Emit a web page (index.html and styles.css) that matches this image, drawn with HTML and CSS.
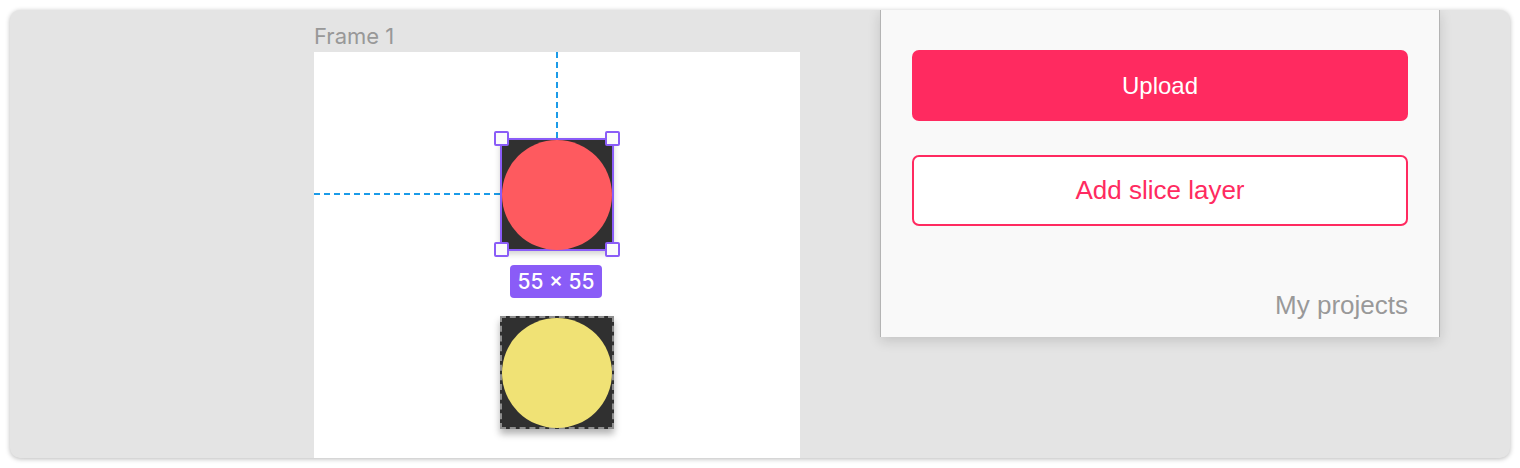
FILE: index.html
```html
<!DOCTYPE html>
<html lang="en">
<head>
  <meta charset="UTF-8" />
  <meta name="viewport" content="width=device-width, initial-scale=1.0"/>
  <title>Slicer</title>
  <link rel="stylesheet" href="styles.css">
</head>
<body>
  <div class="window">
    <div class="canvas">
      <div class="frame-label">Frame 1</div>
      <div class="frame"></div>

      <!-- guides from the selection to the frame edges -->
      <div class="guide guide-v"></div>
      <div class="guide guide-h"></div>

      <div class="layer layer-selected">
        <div class="dot dot-red"></div>
        <span class="handle tl"></span>
        <span class="handle tr"></span>
        <span class="handle bl"></span>
        <span class="handle br"></span>
      </div>
      <div class="size-badge">55 × 55</div>

      <div class="layer layer-slice">
        <div class="dot dot-yellow"></div>
      </div>
    </div>

    <div class="panel">
      <button class="btn btn-primary">Upload</button>
      <button class="btn btn-outline">Add slice layer</button>
      <a class="projects" href="#">My projects</a>
    </div>
  </div>
</body>
</html>
```

FILE: styles.css
```css
:root {
  --pink: #ff2a60;
  --purple: #8a5cf7;
  --guide: #1b9be8;
  --canvas-bg: #e4e4e4;
}

body {
  margin: 0;
  padding: 10px;
  background: #ffffff;
  font-family: 'Liberation Sans', Arial, sans-serif;
}

.window {
  position: relative;
  height: 448px;
  border-radius: 10px;
  background: var(--canvas-bg);
  box-shadow: 0 1px 5px rgba(0,0,0,0.28);
  overflow: hidden;
}

.canvas {
  position: absolute;
  inset: 0;
}

.frame-label {
  position: absolute;
  left: 304px;
  top: 13px;
  font-family: Inter, 'Noto Sans', sans-serif;
  font-size: 22px;
  color: #989898;
}

.frame {
  position: absolute;
  left: 304px;
  top: 42px;
  width: 486px;
  bottom: 0;
  background: #ffffff;
}

.guide {
  position: absolute;
}
.guide-v {
  left: 546px;
  top: 42px;
  height: 86px;
  border-left: 2px dashed var(--guide);
}
.guide-h {
  left: 304px;
  top: 183px;
  width: 186px;
  border-top: 2px dashed var(--guide);
}

.layer {
  position: absolute;
  left: 490px;
  width: 114px;
  height: 113px;
  box-sizing: border-box;
  background: #303030;
  display: flex;
  align-items: center;
  justify-content: center;
}

.layer-selected {
  top: 128px;
  border: 2px solid var(--purple);
  box-shadow: 0 3px 6px rgba(0,0,0,0.18);
}

.layer-slice {
  top: 306px;
  border: 2px dashed #8e8e8e;
  box-shadow: 0 5px 7px rgba(0,0,0,0.3);
}

.dot {
  width: 110px;
  height: 110px;
  border-radius: 50%;
}
.dot-red { background: #fe5a5f; }
.dot-yellow { background: #f0e275; }

.handle {
  position: absolute;
  width: 15px;
  height: 15px;
  box-sizing: border-box;
  border-radius: 2px;
  background: #fbfbfb;
  border: 2px solid var(--purple);
}
.handle.tl { left: -8px; top: -9px; }
.handle.tr { right: -8px; top: -9px; }
.handle.bl { left: -8px; bottom: -8px; }
.handle.br { right: -8px; bottom: -8px; }

.size-badge {
  position: absolute;
  left: 500px;
  top: 255px;
  width: 92px;
  height: 33px;
  border-radius: 4px;
  background: var(--purple);
  color: #ffffff;
  font-family: Inter, 'Noto Sans', sans-serif;
  font-size: 21px;
  font-weight: 500;
  display: flex;
  align-items: center;
  justify-content: center;
}

.panel {
  position: absolute;
  left: 870px;
  top: 0;
  width: 560px;
  height: 327px;
  box-sizing: border-box;
  padding: 40px 31px 0 31px;
  background: #f9f9f9;
  border-left: 1px solid #b4b4b4;
  border-right: 1px solid #b4b4b4;
  box-shadow: 0 4px 12px rgba(0,0,0,0.14);
  display: flex;
  flex-direction: column;
}

.btn {
  height: 71px;
  border-radius: 7px;
  font-family: 'Liberation Sans', Arial, sans-serif;
  font-size: 24px;
  cursor: pointer;
}

.btn-primary {
  border: none;
  background: var(--pink);
  color: #ffffff;
}

.btn-outline {
  margin-top: 34px;
  height: 71px;
  border: 2px solid var(--pink);
  background: #ffffff;
  color: var(--pink);
  font-size: 26px;
}

.projects {
  margin-top: 64px;
  align-self: flex-end;
  font-size: 26px;
  color: #999999;
  text-decoration: none;
}
```
